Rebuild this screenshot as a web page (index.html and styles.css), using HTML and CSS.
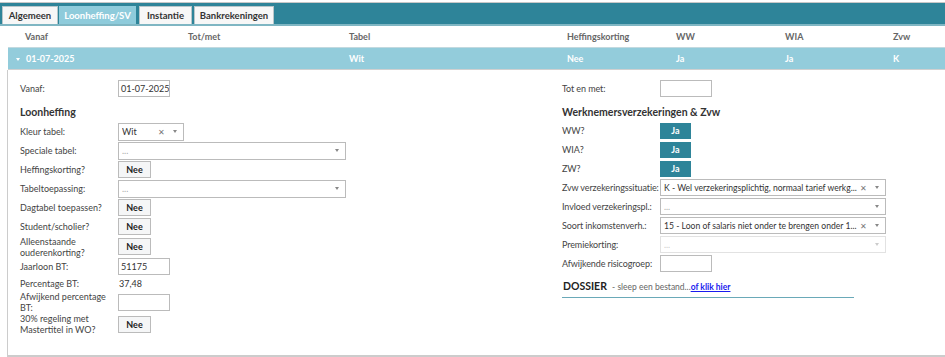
FILE: index.html
```html
<!DOCTYPE html>
<html lang="nl">
<head>
    <meta charset="UTF-8">
    <title>Loonheffing/SV</title>
    <link rel="stylesheet" href="styles.css">
</head>
<body>
    <div class="tabbar">
        <span class="tab t-alg">Algemeen</span>
        <span class="tab t-loon active">Loonheffing/SV</span>
        <span class="tab t-inst">Instantie</span>
        <span class="tab t-bank">Bankrekeningen</span>
    </div>

    <div class="grid">
        <div class="grid-head">
            <span>Vanaf</span>
            <span>Tot/met</span>
            <span>Tabel</span>
            <span>Heffingskorting</span>
            <span>WW</span>
            <span>WIA</span>
            <span>Zvw</span>
        </div>
        <div class="grid-row">
            <span><i class="caret"></i>01-07-2025</span>
            <span></span>
            <span>Wit</span>
            <span>Nee</span>
            <span>Ja</span>
            <span>Ja</span>
            <span>K</span>
        </div>

        <div class="detail">
            <div class="col">
                <div class="row">
                    <label>Vanaf:</label>
                    <div class="input small">01-07-2025</div>
                </div>
                <h3>Loonheffing</h3>
                <div class="row">
                    <label>Kleur tabel:</label>
                    <div class="select kleur"><span class="val">Wit</span><span class="clear">&#10005;</span><span class="arrow"></span></div>
                </div>
                <div class="row">
                    <label>Speciale tabel:</label>
                    <div class="select wide"><span class="val empty">...</span><span class="arrow"></span></div>
                </div>
                <div class="row">
                    <label>Heffingskorting?</label>
                    <div class="toggle">Nee</div>
                </div>
                <div class="row">
                    <label>Tabeltoepassing:</label>
                    <div class="select wide"><span class="val empty">...</span><span class="arrow"></span></div>
                </div>
                <div class="row">
                    <label>Dagtabel toepassen?</label>
                    <div class="toggle">Nee</div>
                </div>
                <div class="row">
                    <label>Student/scholier?</label>
                    <div class="toggle">Nee</div>
                </div>
                <div class="row tall">
                    <label>Alleenstaande ouderenkorting?</label>
                    <div class="toggle">Nee</div>
                </div>
                <div class="row">
                    <label>Jaarloon BT:</label>
                    <div class="input small">51175</div>
                </div>
                <div class="row short">
                    <label>Percentage BT:</label>
                    <span class="value">37,48</span>
                </div>
                <div class="row taller">
                    <label>Afwijkend percentage BT:</label>
                    <div class="input small"></div>
                </div>
                <div class="row taller">
                    <label>30% regeling met Mastertitel in WO?</label>
                    <div class="toggle">Nee</div>
                </div>
            </div>

            <div class="col right">
                <div class="row">
                    <label>Tot en met:</label>
                    <div class="input small"></div>
                </div>
                <h3 class="right-head">Werknemersverzekeringen &amp; Zvw</h3>
                <div class="row">
                    <label>WW?</label>
                    <div class="toggle on">Ja</div>
                </div>
                <div class="row">
                    <label>WIA?</label>
                    <div class="toggle on">Ja</div>
                </div>
                <div class="row">
                    <label>ZW?</label>
                    <div class="toggle on">Ja</div>
                </div>
                <div class="row">
                    <label>Zvw verzekeringssituatie:</label>
                    <div class="select long"><span class="val">K - Wel verzekeringsplichtig, normaal tarief werkg...</span><span class="clear">&#10005;</span><span class="arrow"></span></div>
                </div>
                <div class="row">
                    <label>Invloed verzekeringspl.:</label>
                    <div class="select long"><span class="val empty">...</span><span class="arrow"></span></div>
                </div>
                <div class="row">
                    <label>Soort inkomstenverh.:</label>
                    <div class="select long"><span class="val">15 - Loon of salaris niet onder te brengen onder 1...</span><span class="clear">&#10005;</span><span class="arrow"></span></div>
                </div>
                <div class="row">
                    <label>Premiekorting:</label>
                    <div class="select long disabled"><span class="val empty">...</span><span class="arrow"></span></div>
                </div>
                <div class="row">
                    <label>Afwijkende risicogroep:</label>
                    <div class="input small"></div>
                </div>
                <div class="dossier">
                    <b>DOSSIER</b> <span class="hint">- sleep een bestand...</span><a href="#">of klik hier</a>
                </div>
            </div>
        </div>
    </div>
</body>
</html>
```

FILE: styles.css
```css
body {
    margin: 0;
    font-family: Lato, "Open Sans", sans-serif;
    font-size: 9px;
    color: #444;
    background-color: #fff;
}

.tabbar {
    height: 21px;
    margin-top: 2px;
    border-top: 1px solid #c8c8c8;
    border-bottom: 2px solid #7fb6c3;
    background-color: #2e8499;
    display: flex;
    align-items: flex-end;
    padding-left: 2px;
}

.tab {
    box-sizing: border-box;
    height: 18px;
    line-height: 17px;
    text-align: center;
    background-color: #f7f7f7;
    border: 1px solid #b9c6ca;
    border-bottom: none;
    font-weight: bold;
    color: #333;
    font-size: 9.5px;
    white-space: nowrap;
}

.t-alg {
    width: 56px;
    margin-right: 1px;
}

.t-loon {
    width: 77px;
    margin-right: 3px;
}

.t-inst {
    width: 53px;
    margin-right: 2px;
}

.t-bank {
    width: 80px;
}

.tab.active {
    background-color: #8ecbdb;
    border-color: #8ecbdb;
    color: #fff;
}

.grid {
    margin-left: 8px;
}

.grid-head,
.grid-row {
    display: grid;
    grid-template-columns: 163px 161px 218px 109px 109px 108px 1fr;
    padding-left: 17px;
    font-weight: bold;
}

.grid-head {
    height: 21px;
    line-height: 21px;
    color: #666;
}

.grid-row {
    height: 21px;
    line-height: 21px;
    background-color: #93ccdb;
    color: #fff;
    border-top: 1px solid #c2d9df;
    border-bottom: 1px solid #d0d0d0;
}

.grid-row span:first-child {
    margin-left: -9px;
}

.caret {
    display: inline-block;
    width: 0;
    height: 0;
    border-left: 2.5px solid transparent;
    border-right: 2.5px solid transparent;
    border-top: 3px solid #fff;
    margin-right: 6px;
    vertical-align: 1px;
}

.detail {
    display: grid;
    grid-template-columns: 542px 1fr;
    padding: 9px 0 0 12px;
    height: 276px;
    border-left: 1px solid #ccc;
    border-bottom: 2px solid #ccc;
    margin-left: -1px;
}

.row {
    display: flex;
    align-items: center;
    height: 19px;
}

.row.tall {
    height: 21px;
}

.row.short {
    height: 15px;
}

.row.taller {
    height: 22px;
}

.row label {
    width: 98px;
    flex-shrink: 0;
    line-height: 11px;
    padding-right: 4px;
    box-sizing: border-box;
}

.right .row label {
    white-space: nowrap;
    padding-right: 0;
    letter-spacing: -0.1px;
}

h3 {
    margin: 0;
    height: 24px;
    line-height: 29px;
    font-size: 10.5px;
    font-weight: bold;
    color: #333;
}

h3.right-head {
    height: 23px;
    line-height: 28px;
}

.input {
    box-sizing: border-box;
    height: 17px;
    line-height: 15px;
    border: 1px solid #bbb;
    padding: 0 2px;
    color: #333;
    background-color: #fff;
    white-space: nowrap;
    overflow: hidden;
}

.input.small {
    width: 52px;
}

.value {
    padding-left: 1px;
    color: #333;
}

.select {
    box-sizing: border-box;
    height: 18px;
    border: 1px solid #bbb;
    display: flex;
    align-items: center;
    padding: 0 6px 0 3px;
    color: #333;
}

.select.kleur {
    width: 66px;
}

.select.wide {
    width: 228px;
}

.select.long {
    width: 226px;
    height: 17px;
    font-size: 8.6px;
}

.select.disabled {
    border-color: #e2e2e2;
}

.select .val {
    flex: 1;
    min-width: 0;
    white-space: nowrap;
    overflow: hidden;
}

.select .val.empty {
    color: #aaa;
}

.select.disabled .val.empty {
    color: #ccc;
}

.select .clear {
    color: #777;
    font-size: 8px;
    margin: 0 8px 0 2px;
}

.select .arrow {
    flex-shrink: 0;
    width: 0;
    height: 0;
    border-left: 2.5px solid transparent;
    border-right: 2.5px solid transparent;
    border-top: 3px solid #888;
}

.select.disabled .arrow {
    border-top-color: #ccc;
}

.toggle {
    box-sizing: border-box;
    width: 33px;
    height: 17px;
    line-height: 15px;
    text-align: center;
    border: 1px solid #bbb;
    background-color: #f5f6f7;
    color: #222;
    font-weight: bold;
}

.toggle.on {
    width: 31px;
    height: 16px;
    line-height: 14px;
    background-color: #2e8499;
    border-color: #2e8499;
    color: #fff;
}

.dossier {
    width: 291px;
    margin-top: 6px;
    padding: 1px 0 5px 1px;
    border-bottom: 1px solid #6aa9b8;
    color: #666;
    font-size: 8.5px;
}

.dossier b {
    font-size: 10.5px;
    color: #222;
    margin-right: 3px;
}

.dossier a {
    color: #1a1aee;
    font-weight: bold;
}
```
